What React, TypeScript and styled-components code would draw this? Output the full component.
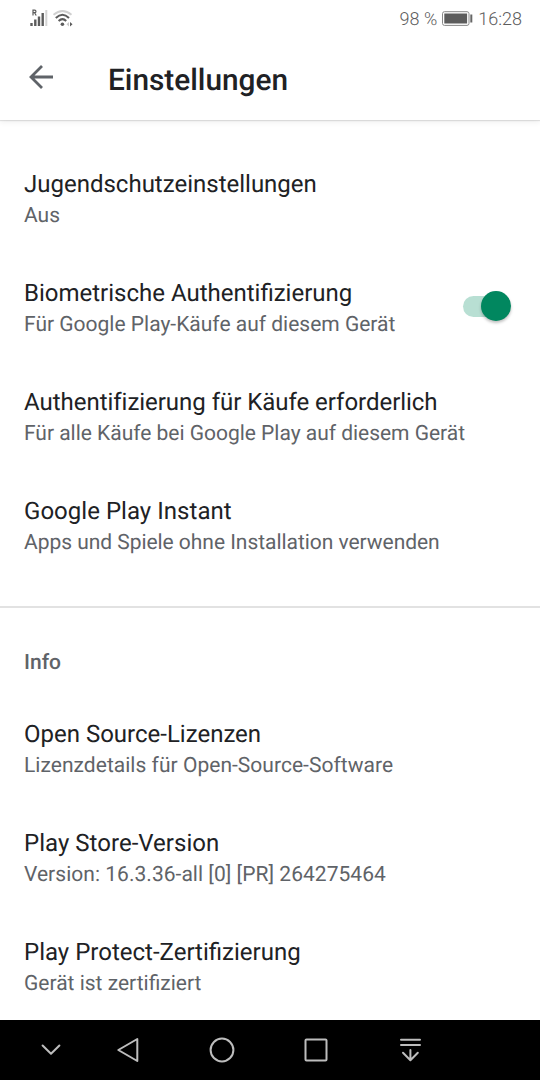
import React from 'react';
import styled, { createGlobalStyle } from 'styled-components';

const Global = createGlobalStyle`
  * { box-sizing: border-box; }
  body {
    margin: 0; background: #fff; color: #202124;
    font-family: Roboto, "Noto Sans", sans-serif;
    text-rendering: geometricPrecision;
  }
`;
const Screen = styled.div`
  width: 540px; height: 1080px; display: flex; flex-direction: column; overflow: hidden; background: #fff;
`;
const StatusBar = styled.div`
  height: 38px; flex: none; display: flex; align-items: center; justify-content: space-between;
  padding: 0 18px 0 28.5px; color: #5c5c5c; font-size: 18px; font-weight: 300;
`;
const StatusGroup = styled.div<{ $lift?: number }>`
  display: flex; align-items: center; gap: 5px; margin-top: ${p => -(p.$lift ?? 0)}px;
`;
const AppBar = styled.header`
  height: 82px; flex: none; display: flex; align-items: center; padding: 0 24px;
  box-shadow: 0 1px 1px rgba(0, 0, 0, .1), 0 2px 6px rgba(0, 0, 0, .07);
  clip-path: inset(0 0 -12px 0);
`;
const BackIcon = styled.svg`
  margin: -4px 51px 0 0;
`;
const Title = styled.h1`
  margin: 0; padding-top: 3px; font-size: 29.8px; line-height: 36px; font-weight: 500;
`;
const Content = styled.main`
  flex: 1; min-height: 0; overflow: hidden; padding-top: 24px;
`;
const Row = styled.div`
  height: 109px; display: flex; align-items: flex-start; justify-content: space-between; padding: 24px 29px 0 24px;
`;
const Name = styled.div<{ $tracking: number }>`
  font-size: 24px; line-height: 32px; white-space: nowrap;
  letter-spacing: ${p => p.$tracking}px;
`;
const Detail = styled.div<{ $tracking: number }>`
  margin-top: 2px; font-size: 21px; line-height: 28px; color: #5f6368; white-space: nowrap;
  letter-spacing: ${p => p.$tracking}px;
`;
const Switch = styled.button`
  width: 50px; height: 32px; margin-top: 13px; padding: 0; border: 0; background: none;
  display: flex; align-items: center;
  &::before {
    content: ""; flex: none; width: 42px; height: 21px; border-radius: 11px; background: #b8dfd3; margin: 0 -24px 0 2px;
  }
`;
const Thumb = styled.span`
  position: relative; flex: none; width: 30px; height: 30px; border-radius: 50%; background: #01875f;
  box-shadow: 0 2px 3px rgba(0, 0, 0, .25);
`;
const Divider = styled.hr`
  margin: 26px 0 0; height: 2px; border: 0; background: #e2e2e2;
`;
const Section = styled.div`
  height: 86px; padding: 41px 24px 0; font-size: 21px; line-height: 28px; font-weight: 500; color: #5f6368;
`;
const Nav = styled.nav`
  height: 60px; flex: none; background: #000; display: flex; align-items: center; padding-left: 21px;
`;
const NavButton = styled.button<{ $width?: number }>`
  width: ${p => p.$width ?? 94}px; height: 60px; padding: 0; border: 0; background: none;
  display: flex; align-items: center; justify-content: center;
`;
const NavIcon = styled.svg`
  fill: none; stroke: #bdbdbd; stroke-width: 2; stroke-linecap: round; stroke-linejoin: round;
`;

interface ItemProps {
  name: string;
  detail: string;
  nameTracking?: number;
  tracking?: number;
  children?: React.ReactNode;
}

function Item({ name, detail, nameTracking = 0, tracking = 0, children }: ItemProps) {
  return (
    <Row>
      <div>
        <Name $tracking={nameTracking}>{name}</Name>
        <Detail $tracking={tracking}>{detail}</Detail>
      </div>
      {children}
    </Row>
  );
}

function SignalIcon() {
  return (
    <svg width="19" height="20" viewBox="0 0 19 20">
      <path d="M2.5 16v3M6.3 12.5V19M10 9.5V19M13.7 6V19" stroke="#5c5c5c" strokeWidth="2.4" />
      <path d="M17.3 3v16" stroke="#d4d4d4" strokeWidth="2" />
      <path d="M4 8.5V3.2h1.7a1.2 1.2 0 0 1 0 2.5H4m1.6 0l1.6 2.8" fill="none" stroke="#5c5c5c" strokeWidth="1.2" />
    </svg>
  );
}

function WifiIcon() {
  return (
    <svg width="20" height="20" viewBox="0 0 20 20" fill="none" strokeWidth="2">
      <path d="M.5 7.8Q9.5 .1 18.5 7.8" stroke="#d0d0d0" />
      <path d="M2.8 11Q9.5 4.6 16 11M5.6 14Q9.5 10.3 13.2 14" stroke="#5c5c5c" />
      <circle cx="9.4" cy="17.3" r="1.8" fill="#5c5c5c" />
      <path d="M16 15l-2.5 2.3L16 19.5z" fill="#c8c8c8" />
      <path d="M17 15l2.5 2.3L17 19.5z" fill="#5c5c5c" />
    </svg>
  );
}

function BatteryIcon() {
  return (
    <svg width="31" height="16" viewBox="0 0 31 16">
      <rect x=".5" y=".7" width="26.5" height="13.7" rx="2" fill="#fff" stroke="#888" />
      <rect x="2.3" y="2.5" width="22.8" height="10" fill="#5c5c5c" />
      <path d="M29.3 3.5v8" stroke="#666" strokeWidth="2" />
    </svg>
  );
}

export default function App() {
  return (
    <Screen>
      <Global />
      <StatusBar>
        <StatusGroup $lift={5}><SignalIcon /><WifiIcon /></StatusGroup>
        <StatusGroup><span>98 %</span><BatteryIcon /><span>16:28</span></StatusGroup>
      </StatusBar>
      <AppBar>
        <BackIcon width="33" height="30" viewBox="0 0 33 30"><path d="M29 15H6.5M18 4L7 15l11 11" fill="none" stroke="#5f6368" strokeWidth="2.8" /></BackIcon>
        <Title>Einstellungen</Title>
      </AppBar>
      <Content>
        <Item name="Jugendschutzeinstellungen" detail="Aus" />
        <Item name="Biometrische Authentifizierung" detail="Für Google Play-Käufe auf diesem Gerät">
          <Switch role="switch" aria-checked="true"><Thumb /></Switch>
        </Item>
        <Item name="Authentifizierung für Käufe erforderlich" nameTracking={-0.03} detail="Für alle Käufe bei Google Play auf diesem Gerät" tracking={-0.02} />
        <Item name="Google Play Instant" nameTracking={0.03} detail="Apps und Spiele ohne Installation verwenden" tracking={-0.04} />
        <Divider />
        <Section>Info</Section>
        <Item name="Open Source-Lizenzen" detail="Lizenzdetails für Open-Source-Software" tracking={0.03} />
        <Item name="Play Store-Version" nameTracking={0.03} detail="Version: 16.3.36-all [0] [PR] 264275464" tracking={0.03} />
        <Item name="Play Protect-Zertifizierung" detail="Gerät ist zertifiziert" />
      </Content>
      <Nav>
        <NavButton $width={60}><NavIcon width="24" height="24"><path d="M3.6 7.5l8.4 8.3 8.4-8.3" /></NavIcon></NavButton>
        <NavButton><NavIcon width="28" height="28"><path d="M23.3 3v22L4.3 14z" /></NavIcon></NavButton>
        <NavButton><NavIcon width="28" height="28"><circle cx="14" cy="14" r="11.4" /></NavIcon></NavButton>
        <NavButton><NavIcon width="28" height="28"><rect x="3.5" y="3.5" width="21" height="21" rx="1" /></NavIcon></NavButton>
        <NavButton><NavIcon width="28" height="28"><path d="M5 3.8h19M5 9h19M14.4 14v10M7 16.8l7.4 7.4 7.4-7.4" /></NavIcon></NavButton>
      </Nav>
    </Screen>
  );
}
